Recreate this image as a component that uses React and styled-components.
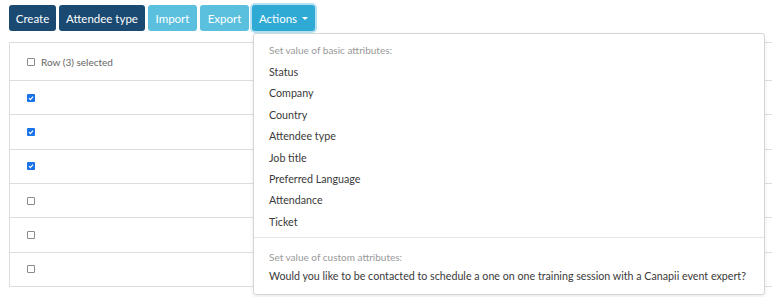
import React from 'react';
import styled, { createGlobalStyle } from 'styled-components';

const GlobalStyle = createGlobalStyle`
  html, body {
    margin: 0;
    padding: 0;
    background: #fff;
    overflow: hidden;
  }
  body {
    font-family: Lato, "Open Sans", "Liberation Sans", sans-serif;
    color: #333;
  }
`;

const Page = styled.div`
  position: relative;
  width: 772px;
  height: 297px;
  padding: 5px 0 0 9px;
  box-sizing: border-box;
  overflow: hidden;
`;

/* Toolbar with action buttons */
const Toolbar = styled.div`
  display: flex;
  gap: 3px;
  height: 26px;
`;

const tones = {
  dark: '#1a4a72',
  light: '#5bc0de',
  info: '#2eaad5',
};

const Button = styled.button`
  width: ${(p) => p.w}px;
  height: 26px;
  padding: 0;
  border: none;
  border-radius: 3px;
  background: ${(p) => tones[p.tone]};
  color: #fff;
  font-family: inherit;
  font-size: 11.5px;
  display: flex;
  align-items: center;
  justify-content: center;
  gap: 5px;
  box-shadow: ${(p) => (p.focused ? '0 0 0 2px rgba(46, 170, 213, 0.35)' : 'none')};
`;

const Caret = styled.span`
  width: 0;
  height: 0;
  border-left: 3px solid transparent;
  border-right: 3px solid transparent;
  border-top: 3px solid #fff;
`;

const ActionsWrap = styled.div`
  position: relative;
`;

/* Table */
const Table = styled.div`
  margin-top: 11px;
  width: 780px;
  border-top: 1px solid #ddd;
  border-left: 1px solid #ddd;
`;

const Row = styled.div`
  display: flex;
  align-items: center;
  height: ${(p) => (p.header ? '37px' : '33.33px')};
  padding-left: 17px;
  border-bottom: 1px solid #ddd;
  gap: 6px;
  font-size: 10px;
  color: #666;
`;

const Check = styled.span`
  width: 8px;
  height: 8px;
  box-sizing: border-box;
  border-radius: 1px;
  border: ${(p) => (p.checked ? 'none' : '1px solid #8a8a8a')};
  background: ${(p) => (p.checked ? '#1a73e8' : '#fff')};
  display: flex;
  align-items: center;
  justify-content: center;
`;

/* Dropdown menu */
const Menu = styled.div`
  position: absolute;
  top: 28px;
  left: 1px;
  width: 512px;
  box-sizing: border-box;
  background: #fff;
  border: 1px solid #d6d6d6;
  border-radius: 3px;
  box-shadow: 0 2px 4px rgba(0, 0, 0, 0.08);
  padding: 6px 0 7px;
  z-index: 5;
`;

const MenuHeader = styled.div`
  padding: ${(p) => (p.tight ? '4px 15px 2px' : '4px 15px 5px')};
  font-size: 10px;
  color: #999;
  line-height: 12px;
`;

const MenuItem = styled.div`
  padding: 0 15px;
  height: 21.4px;
  line-height: 21.4px;
  font-size: 10.7px;
  color: #3a3a3a;
  white-space: nowrap;
`;

const Divider = styled.div`
  height: 1px;
  background: #e5e5e5;
  margin: 5px 0 9px;
`;

const basic = [
  'Status',
  'Company',
  'Country',
  'Attendee type',
  'Job title',
  'Preferred Language',
  'Attendance',
  'Ticket',
];

const CheckMark = () => (
  <svg width="6" height="6" viewBox="0 0 6 6">
    <path d="M1 3.2 L2.4 4.6 L5 1.6" stroke="#fff" strokeWidth="1.2" fill="none" />
  </svg>
);

export default function App() {
  const rows = [true, true, true, false, false, false];
  return (
    <Page>
      <GlobalStyle />
      <Toolbar>
        <Button tone="dark" w={47}>Create</Button>
        <Button tone="dark" w={86}>Attendee type</Button>
        <Button tone="light" w={49}>Import</Button>
        <Button tone="light" w={49}>Export</Button>
        <ActionsWrap>
          <Button tone="info" w={63} focused>
            Actions <Caret />
          </Button>
          <Menu>
            <MenuHeader>Set value of basic attributes:</MenuHeader>
            {basic.map((b) => (
              <MenuItem key={b}>{b}</MenuItem>
            ))}
            <Divider />
            <MenuHeader tight>Set value of custom attributes:</MenuHeader>
            <MenuItem>
              Would you like to be contacted to schedule a one on one training session with a Canapii event expert?
            </MenuItem>
          </Menu>
        </ActionsWrap>
      </Toolbar>
      <Table>
        <Row header>
          <Check />
          <span>Row (3) selected</span>
        </Row>
        {rows.map((c, i) => (
          <Row key={i}>
            <Check checked={c}>{c && <CheckMark />}</Check>
          </Row>
        ))}
      </Table>
    </Page>
  );
}
